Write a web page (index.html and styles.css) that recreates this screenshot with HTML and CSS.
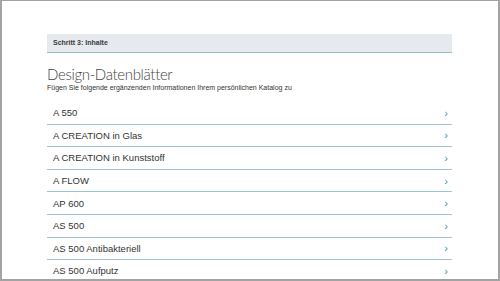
FILE: index.html
```html
<!DOCTYPE html>
<html lang="de">
<head>
  <meta charset="UTF-8" />
  <title>Schritt 3: Inhalte</title>
  <link rel="stylesheet" href="styles.css">
</head>
<body>
  <div class="frame">
    <main class="panel">
      <div class="step-bar">Schritt 3: Inhalte</div>

      <h1>Design-Datenblätter</h1>
      <p class="intro">Fügen Sie folgende ergänzenden Informationen Ihrem persönlichen Katalog zu</p>

      <ul class="sheet-list">
        <li><span>A 550</span><span class="chev">›</span></li>
        <li><span>A CREATION in Glas</span><span class="chev">›</span></li>
        <li><span>A CREATION in Kunststoff</span><span class="chev">›</span></li>
        <li><span>A FLOW</span><span class="chev">›</span></li>
        <li><span>AP 600</span><span class="chev">›</span></li>
        <li><span>AS 500</span><span class="chev">›</span></li>
        <li><span>AS 500 Antibakteriell</span><span class="chev">›</span></li>
        <li><span>AS 500 Aufputz</span><span class="chev">›</span></li>
      </ul>
    </main>
  </div>
</body>
</html>
```

FILE: styles.css
```css
html, body {
  margin: 0;
  padding: 0;
  background: #fff;
}

body {
  font-family: 'Liberation Sans', Arial, sans-serif;
  color: #333;
}

.frame {
  width: 500px;
  height: 281px;
  box-sizing: border-box;
  border: 2px solid #a3a3a3;
  border-top-width: 1px;
  overflow: hidden;
}

.panel {
  width: 405px;
  margin-left: 45px;
  padding-top: 33px;
}

/* Schritt-Leiste */
.step-bar {
  height: 18px;
  line-height: 18px;
  background-color: #e6eaee;
  border-bottom: 1px solid #8fbfc7;
  padding-left: 6px;
  font-size: 7px;
  font-weight: bold;
  color: #3a3a3a;
}

h1 {
  margin: 12px 0 0;
  font-family: 'Lato', sans-serif;
  font-weight: 300;
  font-size: 15px;
  line-height: 18px;
  letter-spacing: -0.35px;
  color: #444;
}

.intro {
  margin: 0;
  font-size: 7px;
  line-height: 9px;
  color: #333;
}

/* Liste der Datenblätter */
.sheet-list {
  list-style: none;
  margin: 10px 0 0;
  padding: 0;
}

.sheet-list li {
  height: 22.6px;
  box-sizing: border-box;
  border-bottom: 1px solid #9cc6d8;
  display: flex;
  justify-content: space-between;
  align-items: center;
  padding: 0 4px 0 6px;
  font-size: 9.5px;
  color: #333;
}

.chev {
  color: #3f93ad;
  font-size: 11px;
}
```
